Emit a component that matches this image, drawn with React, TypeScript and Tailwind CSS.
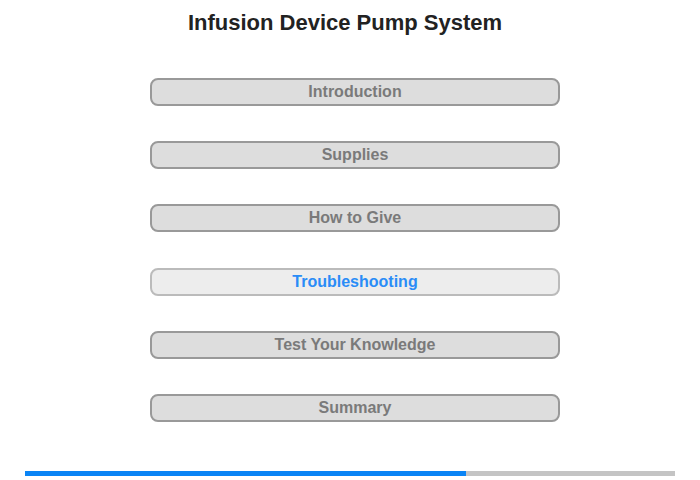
import React from "react";

const items = [
  "Introduction",
  "Supplies",
  "How to Give",
  "Troubleshooting",
  "Test Your Knowledge",
  "Summary",
];

export default function App() {
  return (
    <div
      className="w-[700px] h-[480px] bg-white flex flex-col"
      style={{ fontFamily: '"Liberation Sans", Arial, sans-serif' }}
    >
      <h1 className="text-[22px] leading-[26px] font-bold text-[#222222] text-center pt-[10px] pr-[10px]">
        Infusion Device Pump System
      </h1>
      <div className="flex flex-col items-center gap-[35.2px] mt-[42px] pl-[10px]">
        {items.map((t) => {
          const active = t === "Troubleshooting";
          return (
            <div
              key={t}
              className={
                "w-[410px] h-[28px] rounded-[8px] border-2 flex items-center justify-center text-[16px] font-bold leading-none " +
                (active
                  ? "bg-[#ededed] border-[#bbbbbb] text-[#2a8cf7]"
                  : "bg-[#dddddd] border-[#999999] text-[#7a7a7a]")
              }
            >
              {t}
            </div>
          );
        })}
      </div>
      <div className="mt-auto mb-[4px] mx-[25px] h-[5px] bg-[#c4c4c4] flex">
        <div className="h-full w-[441px] bg-[#0a84f5]" />
      </div>
    </div>
  );
}
